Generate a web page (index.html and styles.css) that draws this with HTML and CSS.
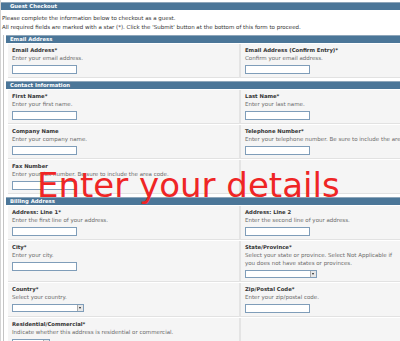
FILE: index.html
```html
<!DOCTYPE html>
<html>
<head>
<meta charset="utf-8">
<link rel="stylesheet" href="styles.css">
</head>
<body>
<div class="page">
  <div class="bar top">Guest Checkout</div>
  <p class="intro">Please complete the information below to checkout as a guest.</p>
  <p class="intro">All required fields are marked with a star (*). Click the 'Submit' button at the bottom of this form to proceed.</p>

  <div class="wrap">
    <div class="section">
      <div class="bar">Email Address</div>
      <div class="grid">
        <div class="cell"><div class="lbl">Email Address*</div><div class="help">Enter your email address.</div><div class="inp"></div></div>
        <div class="cell"><div class="lbl">Email Address (Confirm Entry)*</div><div class="help">Confirm your email address.</div><div class="inp"></div></div>
      </div>
    </div>

    <div class="section">
      <div class="bar">Contact Information</div>
      <div class="grid">
        <div class="cell"><div class="lbl">First Name*</div><div class="help">Enter your first name.</div><div class="inp"></div></div>
        <div class="cell"><div class="lbl">Last Name*</div><div class="help">Enter your last name.</div><div class="inp"></div></div>
        <div class="cell"><div class="lbl">Company Name</div><div class="help">Enter your company name.</div><div class="inp"></div></div>
        <div class="cell"><div class="lbl">Telephone Number*</div><div class="help nowrap">Enter your telephone number. Be sure to include the area code.</div><div class="inp"></div></div>
        <div class="cell"><div class="lbl">Fax Number</div><div class="help">Enter your fax number. Be sure to include the area code.</div><div class="inp"></div></div>
        <div class="cell"></div>
      </div>
    </div>

    <div class="section">
      <div class="bar">Billing Address</div>
      <div class="grid">
        <div class="cell"><div class="lbl">Address: Line 1*</div><div class="help">Enter the first line of your address.</div><div class="inp"></div></div>
        <div class="cell"><div class="lbl">Address: Line 2</div><div class="help">Enter the second line of your address.</div><div class="inp"></div></div>
        <div class="cell"><div class="lbl">City*</div><div class="help">Enter your city.</div><div class="inp"></div></div>
        <div class="cell"><div class="lbl">State/Province*</div><div class="help wrapr">Select your state or province. Select Not Applicable if you does not have states or provinces.</div><div class="sel"><span class="arr"></span></div></div>
        <div class="cell"><div class="lbl">Country*</div><div class="help">Select your country.</div><div class="sel"><span class="arr"></span></div></div>
        <div class="cell"><div class="lbl">Zip/Postal Code*</div><div class="help">Enter your zip/postal code.</div><div class="inp"></div></div>
        <div class="cell"><div class="lbl">Residential/Commercial*</div><div class="help">Indicate whether this address is residential or commercial.</div><div class="sel short"><span class="arr"></span></div></div>
        <div class="cell"></div>
      </div>
    </div>
  </div>
</div>
<div class="overlay">Enter your details</div>
</body>
</html>
```
FILE: styles.css
```css
html, body {
  margin: 0;
  padding: 0;
  background: #fff;
  overflow: hidden;
}
body {
  font-family: "DejaVu Sans", Verdana, sans-serif;
  font-size: 5.5px;
  color: #333;
  width: 400px;
  height: 341px;
  position: relative;
}
.page {
  border-left: 1px solid #d4d4d4;
  padding-top: 2px;
  height: 339px;
  overflow: hidden;
}
.bar {
  background: #4b7698;
  border-top: 1px solid #8ea6ba;
  color: #fff;
  font-weight: bold;
  font-size: 5.3px;
  height: 7px;
  line-height: 7px;
  padding-left: 4px;
}
.bar.top {
  padding-left: 9px;
}
.intro {
  margin: 0;
  padding-left: 1px;
  line-height: 9px;
}
.intro:first-of-type {
  margin-top: 4px;
}
.wrap {
  margin-top: 3px;
  margin-left: 2px;
  border-left: 1px solid #c4c4c4;
  padding-left: 2px;
}
.section {
  margin-bottom: 4px;
}
.section .bar {
  margin-bottom: 1px;
}
.grid {
  display: grid;
  grid-template-columns: 233px minmax(0, 1fr);
  row-gap: 2px;
}
.cell {
  background: #f5f5f5;
  padding: 2px 4px 3px 4px;
  border-bottom: 1px solid #e2e2e2;
  margin-bottom: -1px;
  min-width: 0;
}
.cell:nth-child(2n) {
  border-left: 2px solid #e4e4e4;
  padding-left: 4px;
  padding-right: 0;
}
.cell:nth-child(2n+1) {
  margin-left: 2px;
}
.lbl {
  font-weight: bold;
  font-size: 5.3px;
  line-height: 8px;
  color: #333;
}
.help {
  line-height: 8px;
  color: #6a6a6a;
}
.wrapr {
  padding-right: 4px;
}
.nowrap {
  white-space: nowrap;
  overflow: hidden;
}
.inp {
  margin-top: 3px;
  width: 63px;
  height: 7px;
  background: #fff;
  border: 1px solid #7f9db9;
}
.sel {
  margin-top: 3px;
  width: 70px;
  height: 6px;
  background: #fff;
  border: 1px solid #7f9db9;
  position: relative;
}
.sel.short {
  width: 36px;
}
.arr {
  position: absolute;
  right: 0;
  top: 0;
  width: 5px;
  height: 6px;
  background: #e6e6e6;
  border-left: 1px solid #aaa;
}
.arr::after {
  content: "";
  position: absolute;
  left: 1px;
  top: 2px;
  border-left: 1.5px solid transparent;
  border-right: 1.5px solid transparent;
  border-top: 2px solid #222;
}
.overlay {
  position: absolute;
  left: 37px;
  top: 168px;
  font-family: "DejaVu Sans", sans-serif;
  font-size: 34px;
  line-height: 34px;
  color: #ef2525;
  white-space: nowrap;
}
```
